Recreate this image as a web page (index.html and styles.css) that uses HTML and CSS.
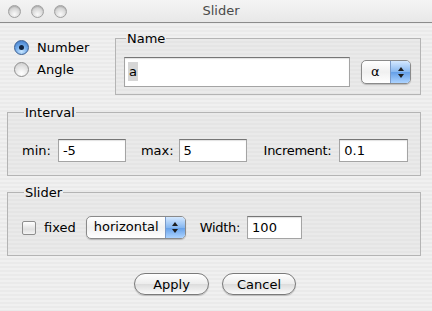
FILE: index.html
```html
<!DOCTYPE html>
<html lang="en">
<head>
    <meta charset="UTF-8">
    <meta name="viewport" content="width=device-width, initial-scale=1.0">
    <title>Slider</title>
    <link rel="stylesheet" href="styles.css">
</head>
<body>

    <div class="window">
        <div class="titlebar">
            <div class="lights">
                <span class="light"></span>
                <span class="light"></span>
                <span class="light"></span>
            </div>
            <div class="title">Slider</div>
        </div>

        <div class="content">
            <div class="top-row">
                <div class="kinds">
                    <label class="radio-row"><span class="radio checked"></span>Number</label>
                    <label class="radio-row"><span class="radio"></span>Angle</label>
                </div>

                <fieldset class="group name-group">
                    <legend>Name</legend>
                    <div class="row">
                        <div class="field name-field"><span class="selected">a</span></div>
                        <div class="popup alpha-popup">
                            <span class="popup-text">α</span>
                            <span class="popup-arrows"><span class="up"></span><span class="down"></span></span>
                        </div>
                    </div>
                </fieldset>
            </div>

            <fieldset class="group interval-group">
                <legend>Interval</legend>
                <div class="row">
                    <span class="lbl">min:</span>
                    <div class="field min-field">-5</div>
                    <span class="lbl max-lbl">max:</span>
                    <div class="field max-field">5</div>
                    <span class="lbl inc-lbl">Increment:</span>
                    <div class="field inc-field">0.1</div>
                </div>
            </fieldset>

            <fieldset class="group slider-group">
                <legend>Slider</legend>
                <div class="row">
                    <span class="checkbox"></span>
                    <span class="lbl fixed-lbl">fixed</span>
                    <div class="popup dir-popup">
                        <span class="popup-text">horizontal</span>
                        <span class="popup-arrows"><span class="up"></span><span class="down"></span></span>
                    </div>
                    <span class="lbl width-lbl">Width:</span>
                    <div class="field width-field">100</div>
                </div>
            </fieldset>

            <div class="buttons">
                <button type="button" class="btn apply">Apply</button>
                <button type="button" class="btn cancel">Cancel</button>
            </div>
        </div>
    </div>

</body>
</html>
```

FILE: styles.css
```css
body {
    margin: 0;
    font-family: "DejaVu Sans", "Liberation Sans", sans-serif;
    font-size: 13px;
    color: #000;
}

.window {
    width: 432px;
    height: 311px;
    background: repeating-linear-gradient(#f0f0f0 0, #f0f0f0 2px, #eaeaea 2px, #eaeaea 4px);
    overflow: hidden;
}

.titlebar {
    height: 22px;
    border-bottom: 1px solid #8c8c8c;
    background: linear-gradient(#f4f4f4, #e8e8e8);
    display: flex;
    align-items: center;
    position: relative;
}

.lights {
    display: flex;
    gap: 10px;
    padding-left: 8px;
}

.light {
    width: 11px;
    height: 11px;
    border-radius: 50%;
    border: 1px solid #a0a0a0;
    background: radial-gradient(circle at 50% 75%, #fafafa 0, #dedede 45%, #bdbdbd 100%);
    box-shadow: inset 0 1px 1px rgba(0, 0, 0, 0.15);
}

.title {
    position: absolute;
    left: 0;
    right: 0;
    top: 3px;
    text-align: center;
    color: #4a4a4a;
    font-size: 13px;
    padding-left: 10px;
}

.content {
    padding: 8px 11px 0 7px;
    display: flex;
    flex-direction: column;
}

.top-row {
    display: flex;
    align-items: flex-start;
}

.kinds {
    width: 108px;
    padding-top: 9px;
    padding-left: 7px;
    box-sizing: border-box;
    display: flex;
    flex-direction: column;
    gap: 7px;
}

.radio-row {
    display: flex;
    align-items: center;
    gap: 8px;
    height: 15px;
}

.radio {
    width: 13px;
    height: 13px;
    border-radius: 50%;
    border: 1px solid #8e8e8e;
    background: radial-gradient(circle at 50% 80%, #ffffff 0, #e6e6e6 50%, #c9c9c9 100%);
    position: relative;
}

.radio.checked {
    border-color: #3b5f92;
    background: radial-gradient(circle at 50% 80%, #c8e6ff 0, #6fa8e8 50%, #3a74c4 100%);
}

.radio.checked::after {
    content: "";
    position: absolute;
    left: 4px;
    top: 4px;
    width: 5px;
    height: 5px;
    border-radius: 50%;
    background: #10233f;
}

.group {
    margin: 0;
    border: 1px solid #b4b4b4;
    background: repeating-linear-gradient(#eaeaea 0, #eaeaea 2px, #e5e5e5 2px, #e5e5e5 4px);
    min-width: 0;
}

.group legend {
    padding: 0 1px;
    margin-left: 2px;
    line-height: 15px;
    font-size: 13px;
}

.row {
    display: flex;
    align-items: center;
}

.name-group {
    flex: 1;
    padding: 11px 9px 7px 8px;
}

.interval-group {
    margin-top: 10px;
    padding: 19px 9px 13px 14px;
}

.slider-group {
    margin-top: 9px;
    padding: 16px 9px 16px 14px;
}

.field {
    background: #fff;
    border: 1px solid #a4a4a4;
    border-top-color: #767676;
    box-shadow: inset 0 1px 1px rgba(0, 0, 0, 0.12);
    box-sizing: border-box;
    height: 23px;
    line-height: 21px;
    padding-left: 4px;
}

.name-field {
    width: 226px;
    height: 30px;
    line-height: 28px;
    padding-left: 3px;
}

.selected {
    background: #d6d6d6;
    padding: 2px 1px;
}

.min-field { width: 68px; margin-left: 7px; }
.max-field { width: 68px; margin-left: 5px; }
.inc-field { width: 69px; margin-left: 8px; }
.max-lbl { margin-left: 15px; }
.inc-lbl { margin-left: 17px; letter-spacing: -0.3px; }

.popup {
    display: flex;
    height: 22px;
    border: 1px solid #8a8a8a;
    border-radius: 5px;
    overflow: hidden;
    box-sizing: border-box;
    background: linear-gradient(#ffffff, #f0f0f0 50%, #ffffff);
    box-shadow: 0 1px 1px rgba(0, 0, 0, 0.2);
}

.popup-text {
    flex: 1;
    padding-left: 7px;
    line-height: 20px;
}

.popup-arrows {
    width: 19px;
    border-left: 1px solid #7a9ac8;
    background: linear-gradient(#d4e8ff, #86b7f0 50%, #649fe8 51%, #acd3ff);
    display: flex;
    flex-direction: column;
    align-items: center;
    justify-content: center;
    gap: 3px;
}

.up,
.down {
    width: 0;
    height: 0;
    border-left: 3px solid transparent;
    border-right: 3px solid transparent;
}

.up { border-bottom: 4px solid #1e1e1e; }
.down { border-top: 4px solid #1e1e1e; }

.alpha-popup {
    width: 50px;
    margin-left: 11px;
    height: 24px;
}

.alpha-popup .popup-text {
    line-height: 22px;
    padding-left: 9px;
}

.checkbox {
    width: 12px;
    height: 12px;
    border: 1px solid #8e8e8e;
    border-radius: 2px;
    background: linear-gradient(#ffffff, #e0e0e0 60%, #f4f4f4);
}

.fixed-lbl { margin-left: 8px; }

.dir-popup {
    width: 100px;
    height: 23px;
    margin-left: 10px;
}

.width-lbl { margin-left: 14px; letter-spacing: -0.3px; }

.width-field {
    width: 55px;
    margin-left: 7px;
}

.buttons {
    display: flex;
    justify-content: center;
    gap: 13px;
    margin-top: 17px;
    padding-left: 2px;
}

.btn {
    font-family: inherit;
    font-size: 13px;
    height: 22px;
    border: 1px solid #7a7a7a;
    border-radius: 11px;
    background: linear-gradient(#ffffff, #ececec 50%, #dcdcdc 51%, #fafafa);
    box-shadow: 0 1px 1px rgba(0, 0, 0, 0.2);
    padding: 0;
    color: #000;
}

.apply { width: 75px; }
.cancel { width: 74px; }
```
